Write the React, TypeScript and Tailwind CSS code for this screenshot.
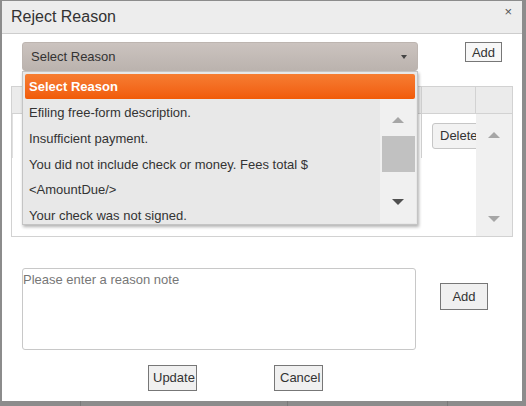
import React from 'react';

const items = [
  'Efiling free-form description.',
  'Insufficient payment.',
  'You did not include check or money. Fees total $ <AmountDue/>',
  'Your check was not signed.',
];

function Tri({ down, color, w = 12, h = 6 }: { down?: boolean; color: string; w?: number; h?: number }) {
  return (
    <svg width={w} height={h} viewBox={`0 0 ${w} ${h}`}>
      <polygon points={down ? `0,0 ${w},0 ${w / 2},${h}` : `0,${h} ${w},${h} ${w / 2},0`} fill={color} />
    </svg>
  );
}

export default function App() {
  return (
    <div className="h-[406px] w-[526px] bg-[#8c8c8c] flex flex-col overflow-hidden font-['Liberation_Sans',Arial,sans-serif] text-[#333]">
      <div className="ml-[2px] mt-px w-[520px] h-[400px] shrink-0 bg-white relative flex flex-col">
        {/* title bar */}
        <div className="h-[33px] shrink-0 bg-[#ededed] border-b border-[#cdcdcd] flex items-center justify-between pl-[9px] pr-[10px]">
          <span className="text-[16px] leading-none">Reject Reason</span>
          <span className="text-[13px] text-[#555] -mt-[11px]">×</span>
        </div>

        {/* select row */}
        <div className="flex mt-[8px]">
          <div className="ml-[20px] w-[396px] h-[29px] rounded-[3px] border border-[#bdb5b0] bg-gradient-to-b from-[#cbc3bf] to-[#bbb3ae] flex items-center justify-between pl-[8px] pr-[10px] text-[13px]">
            <span>Select Reason</span>
            <Tri down color="#444" w={6} h={4} />
          </div>
          <button className="ml-[47px] w-[37px] h-[20px] border border-[#777] bg-[#f7f7f7] text-[13px] leading-none flex items-center justify-center">
            Add
          </button>
        </div>

        {/* grid panel */}
        <div className="mt-[15px] ml-[9px] w-[502px] h-[151px] shrink-0 border border-[#d2d2d2] flex flex-col">
          <div className="h-[27px] shrink-0 bg-[#ebebeb] border-b border-[#d2d2d2] flex">
            <div className="w-[410px] border-r border-[#d2d2d2]" />
            <div className="w-[54px] border-r border-[#d2d2d2]" />
            <div className="flex-1" />
          </div>
          <div className="flex flex-1 min-h-0">
            <div className="w-[410px] h-[44px] border-r border-[#d2d2d2] border-l border-l-[#e0e0e0]" />
            <div className="w-[54px] pt-[9px] pl-[10px] overflow-hidden">
              <button className="w-[50px] h-[26px] rounded-[3px] border border-[#c6c6c6] bg-[#f2f2f2] text-[13px] text-left pl-[7px] whitespace-nowrap">
                Delete
              </button>
            </div>
            <div className="flex-1 bg-[#f0f0f0] flex flex-col items-center justify-between pt-[18px] pb-[14px]">
              <Tri color="#a6a6a6" />
              <Tri down color="#a6a6a6" />
            </div>
          </div>
        </div>

        {/* note row */}
        <div className="flex mt-[31px]">
          <textarea
            placeholder="Please enter a reason note"
            className="ml-[20px] w-[394px] h-[82px] resize-none rounded-[3px] border border-[#c8c8c8] pl-0 pt-[3px] text-[13px] leading-[16px] outline-none placeholder:text-[#777]"
          />
          <button className="ml-[24px] mt-[15px] w-[48px] h-[27px] border border-[#777] bg-[#f0f0f0] text-[13px] flex items-center justify-center">
            Add
          </button>
        </div>

        {/* footer buttons */}
        <div className="flex mt-[15px]">
          <button className="ml-[146px] w-[49px] h-[26px] border border-[#777] bg-[#f0f0f0] text-[13px] text-left pl-[4px] overflow-hidden whitespace-nowrap">
            Update
          </button>
          <button className="ml-[77px] w-[49px] h-[26px] border border-[#777] bg-[#f0f0f0] text-[13px] text-left pl-[5px] overflow-hidden whitespace-nowrap">
            Cancel
          </button>
        </div>

        {/* open dropdown */}
        <div className="absolute left-[20px] top-[70px] w-[396px] h-[154px] bg-[#e8e8e8] border border-[#c4c4c4] shadow-[1px_2px_3px_rgba(0,0,0,0.3)] flex flex-col overflow-hidden">
          <div className="mx-[2px] mt-[2px] h-[25px] shrink-0 rounded-[2px] bg-gradient-to-b from-[#f67d31] to-[#f15b06] text-white font-bold text-[13px] flex items-center pl-[4px]">
            Select Reason
          </div>
          <div className="flex flex-1 min-h-0">
            <div className="flex-1 pl-[6px] text-[13px] overflow-hidden">
              {items.map((t) => (
                <div key={t} className="leading-[25px] py-[0.5px] pr-[60px]">
                  {t}
                </div>
              ))}
            </div>
            <div className="w-[36px] mr-px mb-px bg-[#f0f0f0] flex flex-col items-center pt-[18px]">
              <Tri color="#a6a6a6" />
              <div className="mt-[13px] w-[33px] h-[36px] bg-[#c1c1c1]" />
              <div className="mt-[27px]">
                <Tri down color="#505050" />
              </div>
            </div>
          </div>
        </div>
      </div>

      {/* page behind overlay */}
      <div className="flex flex-1">
        <div className="w-[81px] border-r border-[#7a7a7a]" />
        <div className="w-[207px] border-r border-[#7a7a7a]" />
        <div className="w-[160px] border-r border-[#7a7a7a]" />
      </div>
    </div>
  );
}
